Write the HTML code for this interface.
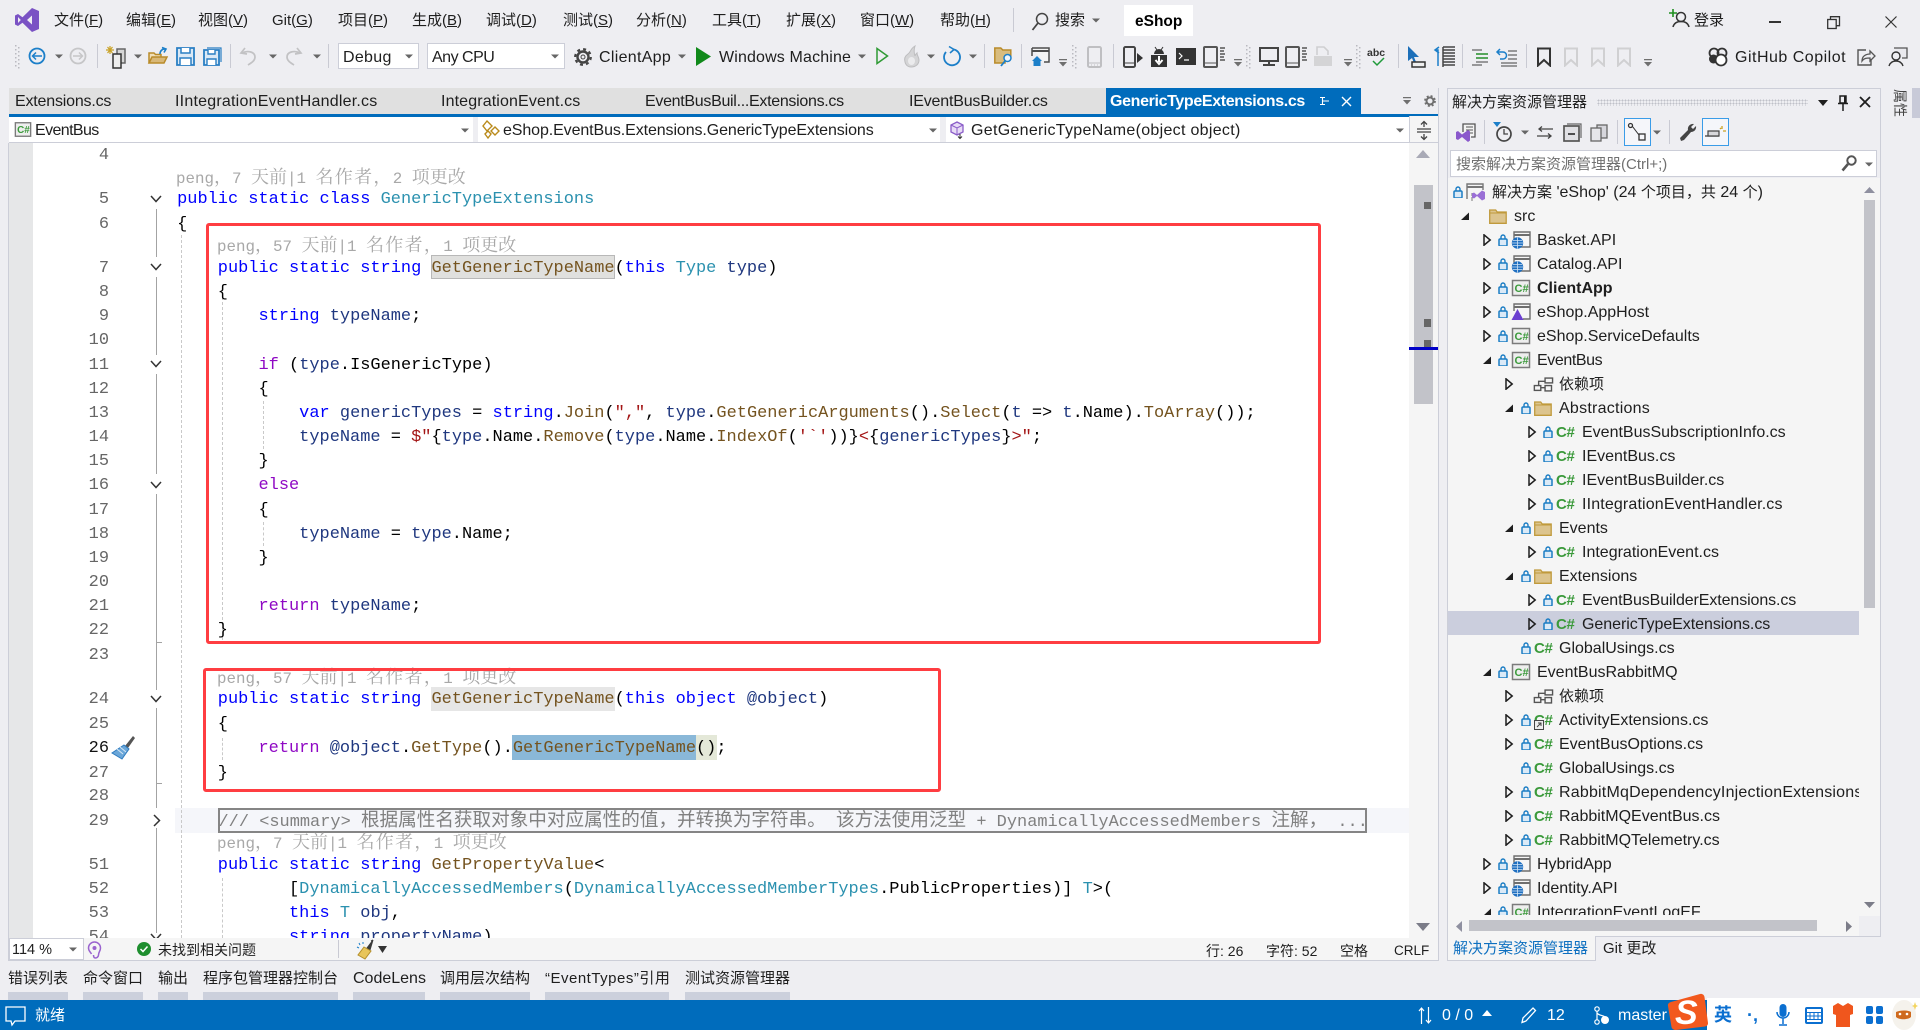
<!DOCTYPE html>
<html lang="zh-CN"><head><meta charset="utf-8"><title>eShop - Visual Studio</title>
<style>
*{box-sizing:border-box}
html,body{margin:0;padding:0;width:1920px;height:1030px;overflow:hidden;background:#eeeef2}
body{position:relative;font-family:"Liberation Sans","Noto Sans CJK SC",sans-serif;color:#1e1e1e}
.t{position:absolute;white-space:nowrap;line-height:24px;font-size:15px;margin-top:1px}
.l16{font-size:16px}
.b{position:absolute}
svg.s{position:absolute;overflow:visible}
i{font-style:normal}
u{text-underline-offset:1px}
#ed{position:absolute;left:0;top:0;width:1920px;height:1030px;clip-path:inset(143px 511px 92px 9px)}
.c{position:absolute;left:136.4px;white-space:pre;font:16.97px/24px "Liberation Mono","Noto Sans CJK SC",monospace;color:#000;margin-top:2px}
.c i{font-size:18.6px;line-height:20px}
.n{position:absolute;left:49px;width:60px;text-align:right;font:16.97px/24px "Liberation Mono",monospace;color:#666;margin-top:2px}
.cl{position:absolute;white-space:pre;font:15.83px/24px "Liberation Mono","Noto Serif CJK SC",monospace;color:#a8a8a8;margin-top:-1px}
.cl i{font:18px/24px "Noto Serif CJK SC",serif}
.cl i.w{letter-spacing:1.3px}
.k{color:#0000ff}.m{color:#74531f}.y{color:#2b91af}.f{color:#8f08c4}.q{color:#a31515}.v{color:#1f377f}
.dg{position:absolute;width:0;border-left:1px dashed #c9c9c9}
.ol{position:absolute;left:156px;width:1px;background:#a3a3a3}
.red{position:absolute;border:3px solid #ff3d41;border-radius:3px}
#tree{position:absolute;left:0;top:0;width:1920px;height:1030px;clip-path:inset(180px 61px 115px 1448px)}
.r{position:absolute;left:0;width:1859px;height:24px;white-space:nowrap}
.r>*{position:absolute}
.r .x{top:1px;line-height:24px;font-size:16px;white-space:nowrap}
.r .x i{font-size:15px}
.r .a{top:6px;width:12px;height:12px}
.r .l{top:6px;width:12px;height:12px}
.r .i{top:3px;width:20px;height:18px}
.r .cs{top:1px;line-height:24px;font-size:15px;font-weight:700;color:#3b9a3b;letter-spacing:-.3px}
.L1 .a{left:1481px}.L1 .l{left:1497px}.L1 .i{left:1511px}.L1 .x{left:1537px}
.L2 .a{left:1503px}.L2 .l{left:1520px}.L2 .i{left:1534px}.L2 .x{left:1559px}.L2 .cs{left:1534px}
.L3 .a{left:1526px}.L3 .l{left:1542px}.L3 .cs{left:1556px}.L3 .x{left:1582px}
.sep{position:absolute;width:1px;background:#c9cad3}
.tab{color:#1e1e1e}
.bt{position:absolute;top:992px;height:8px;background:#ccd0dc}
</style></head><body>
<svg width="0" height="0" style="position:absolute">
<defs>
<symbol id="open" viewBox="0 0 12 12"><path d="M3 .8 9.2 6 3 11.2Z" fill="none" stroke="#1e1e1e" stroke-width="1.5"/></symbol>
<symbol id="exp" viewBox="0 0 12 12"><path d="M10 2.5V10H2Z" fill="#1e1e1e"/></symbol>
<symbol id="lock" viewBox="0 0 12 12"><rect x="2" y="5" width="8" height="7" rx="1" fill="#dbeaf7" stroke="#1b7dc4" stroke-width="1.5"/><path d="M4 5V3a2 2 0 0 1 4 0v2" fill="none" stroke="#1b7dc4" stroke-width="1.4"/></symbol>
<symbol id="proj" viewBox="0 0 20 18"><rect x="1.5" y="1.5" width="17" height="15" fill="#eee" stroke="#7b7b7b" stroke-width="1.5"/><text x="3.5" y="13" font-family="Liberation Sans" font-size="11" font-weight="700" fill="#3b9a3b">C#</text></symbol>
<symbol id="web" viewBox="0 0 20 18"><path d="M3 8V1h16v15H9" fill="#f6f6f6" stroke="#6e6e6e" stroke-width="1.4"/><path d="M3 4h16" stroke="#6e6e6e" stroke-width="2"/><circle cx="6.5" cy="12" r="5.7" fill="#1f6fc0"/><path d="M1 12h11M6.5 6.5v11M2 9.5h9M2 14.5h9" stroke="#cfe3f5" stroke-width=".8"/></symbol>
<symbol id="apphost" viewBox="0 0 20 18"><path d="M3 8V1h16v15H12" fill="#f6f6f6" stroke="#6e6e6e" stroke-width="1.4"/><path d="M3 4h16" stroke="#6e6e6e" stroke-width="2"/><path d="M6.5 6 12.5 17H.5Z" fill="#6b3fd0"/></symbol>
<symbol id="sln" viewBox="0 0 20 18"><path d="M1 16V1h16v6" fill="#f5f5f5" stroke="#777" stroke-width="1.4"/><path d="M1 4h16" stroke="#777" stroke-width="2"/><path d="M6 14v4M6 10v3" stroke="#777"/><path d="M8 9.5 11 12l5-4.500 3 1.500v7L16 17.500 11 13l-3 2.500-2-1v-4Z" fill="#9a6fd6"/></symbol>
<symbol id="folder" viewBox="0 0 18 15"><path d="M.7 14.300V1h6l1.500 2h9v11.300Z" fill="#dcc48e" stroke="#c09a3c" stroke-width="1.300"/><path d="M1 4h16" stroke="#c09a3c"/></symbol>
<symbol id="dep" viewBox="0 0 20 14"><rect x="1" y="8" width="6" height="4.500" fill="none" stroke="#555" stroke-width="1.300"/><rect x="11" y="1" width="7" height="4.500" fill="none" stroke="#555" stroke-width="1.300"/><rect x="11" y="8" width="6" height="5" fill="none" stroke="#555" stroke-width="1.300"/><path d="M7 10h4M5 8V4h6" fill="none" stroke="#555" stroke-width="1.300"/></symbol>
<symbol id="car" viewBox="0 0 8 5"><path d="M0 .5h8L4 4.500Z" fill="#666"/></symbol>
<symbol id="drop" viewBox="0 0 10 10"><path d="M1 1h8v1.200H1ZM1 4h8L5 8.500Z" fill="#6f6f6f"/></symbol>
<symbol id="grip" viewBox="0 0 6 24"><g fill="#b9b9c0"><rect x="0" y="0" width="1.500" height="1.500"/><rect x="3" y="2" width="1.500" height="1.500"/><rect x="0" y="4" width="1.500" height="1.500"/><rect x="3" y="6" width="1.500" height="1.500"/><rect x="0" y="8" width="1.500" height="1.500"/><rect x="3" y="10" width="1.500" height="1.500"/><rect x="0" y="12" width="1.500" height="1.500"/><rect x="3" y="14" width="1.500" height="1.500"/><rect x="0" y="16" width="1.500" height="1.500"/><rect x="3" y="18" width="1.500" height="1.500"/><rect x="0" y="20" width="1.500" height="1.500"/><rect x="3" y="22" width="1.500" height="1.500"/></g></symbol>
<symbol id="phone" viewBox="0 0 20 24"><rect x="3" y="2" width="13" height="20" rx="1.500" fill="none" stroke="#555" stroke-width="2"/><path d="M3 18h13" stroke="#555" stroke-width="1"/><path d="M6 20h1M9 20h1M12 20h1" stroke="#555"/></symbol>
<symbol id="lines" viewBox="0 0 24 24"><rect x="2" y="2" width="13" height="20" rx="1" fill="none" stroke="#555" stroke-width="2"/><path d="M2 18h13" stroke="#555"/><path d="M18 3h5M18 6h4M18 9h5M18 12h4M18 15h5" stroke="#555" stroke-width="1.500"/></symbol>
<symbol id="bm" viewBox="0 0 16 20"><path d="M2 1.500h12v17L8 13l-6 5.500Z" fill="none" stroke="currentColor" stroke-width="2"/></symbol>
</defs></svg>

<!-- title bar -->
<svg class="s" style="left:15px;top:8px" width="24" height="24" viewBox="0 0 24 24"><path fill-rule="evenodd" fill="#7a52c4" d="M17 0 24 3V21L17 24 7.500 14.800 3 18 0 16.500V7.500L3 6 7.500 9.200ZM3 9V15L5.800 12ZM17 7.500 12 12l5 4.500Z"/></svg>
<div class="t" style="left:54px;top:8px">文件(<u>F</u>)</div>
<div class="t" style="left:126px;top:8px">编辑(<u>E</u>)</div>
<div class="t" style="left:198px;top:8px">视图(<u>V</u>)</div>
<div class="t" style="left:272px;top:8px">Git(<u>G</u>)</div>
<div class="t" style="left:338px;top:8px">项目(<u>P</u>)</div>
<div class="t" style="left:412px;top:8px">生成(<u>B</u>)</div>
<div class="t" style="left:486px;top:8px">调试(<u>D</u>)</div>
<div class="t" style="left:563px;top:8px">测试(<u>S</u>)</div>
<div class="t" style="left:636px;top:8px">分析(<u>N</u>)</div>
<div class="t" style="left:712px;top:8px">工具(<u>T</u>)</div>
<div class="t" style="left:786px;top:8px">扩展(<u>X</u>)</div>
<div class="t" style="left:860px;top:8px">窗口(<u>W</u>)</div>
<div class="t" style="left:940px;top:8px">帮助(<u>H</u>)</div>
<div class="sep" style="left:1013px;top:8px;height:24px"></div>
<svg class="s" style="left:1031px;top:12px" width="18" height="20" viewBox="0 0 18 20"><circle cx="11" cy="7" r="5.500" fill="none" stroke="#444" stroke-width="1.500"/><path d="M7 11 1.500 18" stroke="#444" stroke-width="1.800"/></svg>
<div class="t" style="left:1055px;top:8px">搜索</div>
<svg class="s" style="left:1092px;top:18px" width="8" height="5"><use href="#car"/></svg>
<div class="b" style="left:1124px;top:5px;width:69px;height:31px;background:#fff"></div>
<div class="t" style="left:1135px;top:9px;font-weight:700;font-size:15.500px;color:#000">eShop</div>
<svg class="s" style="left:1668px;top:9px" width="22" height="20" viewBox="0 0 22 20"><path d="M5 0v8M1 4h8" stroke="#1f8f1f" stroke-width="1.600"/><circle cx="13" cy="8" r="4.500" fill="none" stroke="#333" stroke-width="1.500"/><path d="M5 18c1-4 4-5.500 8-5.500s7 1.500 8 5.500" fill="none" stroke="#333" stroke-width="1.500"/></svg>
<div class="t" style="left:1694px;top:8px">登录</div>
<div class="b" style="left:1769px;top:21px;width:12px;height:1.500px;background:#333"></div>
<svg class="s" style="left:1827px;top:16px" width="13" height="13" viewBox="0 0 13 13"><rect x=".7" y="3.500" width="8.500" height="9" fill="#eeeef2" stroke="#333" stroke-width="1.300"/><path d="M3.500 3V.7h9v9H9.500" fill="none" stroke="#333" stroke-width="1.300"/></svg>
<svg class="s" style="left:1885px;top:16px" width="12" height="12"><path d="M.5.500l11 11M11.500.500l-11 11" stroke="#333" stroke-width="1.200"/></svg>

<!-- toolbar -->
<svg class="s" style="left:15px;top:45px" width="6" height="24"><use href="#grip"/></svg>
<svg class="s" style="left:27px;top:46px" width="20" height="20" viewBox="0 0 20 20"><circle cx="10" cy="10" r="7.500" fill="none" stroke="#1c7fc9" stroke-width="1.800"/><path d="M15 10H5.500M9 6.500 5.500 10 9 13.500" fill="none" stroke="#1c7fc9" stroke-width="1.500"/></svg>
<svg class="s" style="left:55px;top:54px" width="8" height="5"><use href="#car"/></svg>
<svg class="s" style="left:68px;top:46px" width="20" height="20" viewBox="0 0 20 20"><circle cx="10" cy="10" r="7.500" fill="none" stroke="#c6c6c8" stroke-width="1.800"/><path d="M5 10h9.500M11 6.500l3.500 3.500-3.500 3.500" fill="none" stroke="#c6c6c8" stroke-width="1.500"/></svg>
<div class="sep" style="left:97px;top:44px;height:24px"></div>
<svg class="s" style="left:106px;top:45px" width="24" height="24" viewBox="0 0 24 24"><path d="M4 1v8M0 5h8M1.500 2l5 6M6.500 2l-5 6" stroke="#c9a227" stroke-width="1.200"/><rect x="11" y="4" width="8" height="14" fill="#d6d6d6" stroke="#666" stroke-width="1.500"/><rect x="7" y="9" width="8" height="14" fill="#eee" stroke="#333" stroke-width="1.500"/></svg>
<svg class="s" style="left:134px;top:54px" width="8" height="5"><use href="#car"/></svg>
<svg class="s" style="left:148px;top:46px" width="20" height="20" viewBox="0 0 20 20"><path d="M1 17V7h5l1.500 1.500H13V11" fill="#f0dfb8" stroke="#b98b2a" stroke-width="1.500"/><path d="M1 17 4 11h15l-3 6Z" fill="#d8b878" stroke="#b98b2a" stroke-width="1.500"/><path d="M12 8c0-3 2-5 5-5M14 1.500 18 3l-2 3.500" fill="none" stroke="#1c7fc9" stroke-width="1.600"/></svg>
<svg class="s" style="left:176px;top:47px" width="19" height="19" viewBox="0 0 19 19"><path d="M1 1h17v17H1Z" fill="#dbe9f6" stroke="#2a7fc4" stroke-width="1.800"/><path d="M5 1v5h9V1M4 18v-7h11v7" fill="#fff" stroke="#2a7fc4" stroke-width="1.500"/></svg>
<svg class="s" style="left:203px;top:47px" width="19" height="19" viewBox="0 0 19 19"><path d="M4 1h14v14" fill="none" stroke="#2a7fc4" stroke-width="1.200"/><path d="M1 3h15v15H1Z" fill="#dbe9f6" stroke="#2a7fc4" stroke-width="1.800"/><path d="M5 3v4h7V3M4 18v-6h9v6" fill="#fff" stroke="#2a7fc4" stroke-width="1.400"/></svg>
<div class="sep" style="left:230px;top:44px;height:24px"></div>
<svg class="s" style="left:239px;top:46px" width="20" height="20" viewBox="0 0 20 20"><path d="M6 2 2 7l6 1M3 7c6-3 13-1 13 4 0 4-4 6-7 8" fill="none" stroke="#c2c2c4" stroke-width="1.700"/></svg>
<svg class="s" style="left:269px;top:54px" width="8" height="5"><use href="#car"/></svg>
<svg class="s" style="left:283px;top:46px" width="20" height="20" viewBox="0 0 20 20"><path d="M14 2l4 5-6 1M17 7C11 4 4 6 4 11c0 4 4 6 7 8" fill="none" stroke="#c2c2c4" stroke-width="1.700"/></svg>
<svg class="s" style="left:313px;top:54px" width="8" height="5"><use href="#car"/></svg>
<div class="sep" style="left:328px;top:44px;height:24px"></div>

<div class="b" style="left:338px;top:43px;width:81px;height:26px;background:#fff;border:1px solid #ccced8"></div>
<div class="t l16" style="left:343px;top:45px;letter-spacing:.3px">Debug</div>
<svg class="s" style="left:405px;top:54px" width="8" height="5"><use href="#car"/></svg>
<div class="b" style="left:427px;top:43px;width:138px;height:26px;background:#fff;border:1px solid #ccced8"></div>
<div class="t l16" style="left:432px;top:45px;letter-spacing:-.5px">Any CPU</div>
<svg class="s" style="left:551px;top:54px" width="8" height="5"><use href="#car"/></svg>
<svg class="s" style="left:574px;top:47px" width="18" height="20" viewBox="0 0 18 20"><circle cx="9" cy="10" r="5.500" fill="none" stroke="#444" stroke-width="2.400"/><circle cx="9" cy="10" r="7.800" fill="none" stroke="#444" stroke-width="2.200" stroke-dasharray="3 3.100"/><circle cx="9" cy="10" r="2" fill="none" stroke="#444"/></svg>
<div class="t l16" style="left:599px;top:45px;letter-spacing:.3px">ClientApp</div>
<svg class="s" style="left:678px;top:54px" width="8" height="5"><use href="#car"/></svg>
<svg class="s" style="left:696px;top:47px" width="15" height="19"><path d="M0 0 15 9.500 0 19Z" fill="#10891a"/></svg>
<div class="t l16" style="left:719px;top:45px;letter-spacing:.15px">Windows Machine</div>
<svg class="s" style="left:858px;top:54px" width="8" height="5"><use href="#car"/></svg>
<svg class="s" style="left:876px;top:47px" width="13" height="18"><path d="M1 1.500 11.500 9 1 16.500Z" fill="none" stroke="#2f9a35" stroke-width="1.500"/></svg>
<svg class="s" style="left:902px;top:45px" width="20" height="24" viewBox="0 0 20 24"><path d="M13 1c-5 3-4 6-7 8C3 11 2 14 3 17c1 4 4 5 6 5 5 0 8-3 8-7 0-3-2-4-2-7-1 1-2 2-2 3-1-3-1-7 0-10Z" fill="#d4d4d6" stroke="#bdbdbf"/><ellipse cx="9.500" cy="16" rx="3.500" ry="4" fill="#ebebed"/></svg>
<svg class="s" style="left:927px;top:54px" width="8" height="5"><use href="#car"/></svg>
<svg class="s" style="left:942px;top:46px" width="20" height="21" viewBox="0 0 20 21"><path d="M12 3.500A8 8 0 1 1 4 6" fill="none" stroke="#1c7fc9" stroke-width="1.800"/><path d="M7 .5 12 3.500 8 7" fill="none" stroke="#1c7fc9" stroke-width="1.600"/></svg>
<svg class="s" style="left:969px;top:54px" width="8" height="5"><use href="#car"/></svg>
<div class="sep" style="left:984px;top:44px;height:24px"></div>
<svg class="s" style="left:994px;top:47px" width="20" height="20" viewBox="0 0 20 20"><path d="M.8 16V1h6l2 2h8v6H11v7Z" fill="#d8bc7e" stroke="#b98b2a" stroke-width="1.500"/><circle cx="13.500" cy="11" r="3.500" fill="#eef5fb" stroke="#1c7fc9" stroke-width="1.500"/><path d="M11 14l-4 5" stroke="#1c7fc9" stroke-width="1.800"/></svg>
<div class="sep" style="left:1021px;top:44px;height:24px"></div>
<svg class="s" style="left:1031px;top:47px" width="19" height="20" viewBox="0 0 19 20"><path d="M1 1h17v14h-5M1 1v8" fill="#f4f4f4" stroke="#4d4d4d" stroke-width="1.500"/><path d="M1 4h17" stroke="#4d4d4d" stroke-width="2"/><path d="M1 14 6 9l5 5H9.500v5h-7v-5Z" fill="#1c7fc9"/></svg>
<svg class="s" style="left:1058px;top:58px" width="10" height="10"><use href="#drop"/></svg>
<svg class="s" style="left:1072px;top:45px" width="6" height="24"><use href="#grip"/></svg>
<svg class="s" style="left:1085px;top:45px;opacity:.3" width="20" height="24"><use href="#phone"/></svg>
<div class="sep" style="left:1113px;top:44px;height:24px"></div>
<svg class="s" style="left:1123px;top:45px" width="20" height="24" viewBox="0 0 20 24"><rect x="1" y="2" width="11" height="20" rx="1.500" fill="none" stroke="#444" stroke-width="2"/><path d="M1 18h11" stroke="#444"/><path d="M14 8l6 5-6 5Z" fill="#333"/></svg>
<svg class="s" style="left:1150px;top:45px" width="18" height="24" viewBox="0 0 18 24"><path d="M1 22V10h16v12Z" fill="#333"/><path d="M4 9a5 5 0 0 1 10 0Z" fill="#333"/><path d="M5 2l2 3M13 2l-2 3" stroke="#333"/><path d="M9 11v6M5.500 15 9 19l3.500-4" fill="none" stroke="#fff" stroke-width="2"/></svg>
<svg class="s" style="left:1176px;top:48px" width="20" height="17" viewBox="0 0 20 17"><rect width="20" height="17" fill="#333"/><path d="M3 5l3 3-3 3M8 12h5" fill="none" stroke="#fff" stroke-width="1.200"/></svg>
<svg class="s" style="left:1202px;top:45px" width="24" height="24"><use href="#lines"/></svg>
<svg class="s" style="left:1233px;top:58px" width="10" height="10"><use href="#drop"/></svg>
<svg class="s" style="left:1246px;top:45px" width="6" height="24"><use href="#grip"/></svg>
<svg class="s" style="left:1259px;top:47px" width="20" height="20" viewBox="0 0 20 20"><rect x="1" y="1" width="18" height="13" fill="none" stroke="#444" stroke-width="2"/><path d="M10 14v3M4 18h12" stroke="#444" stroke-width="2"/></svg>
<svg class="s" style="left:1284px;top:45px" width="24" height="24"><use href="#lines"/></svg>
<svg class="s" style="left:1313px;top:46px" width="20" height="22" viewBox="0 0 20 22"><path d="M4 9V1h7l4 4v4" fill="none" stroke="#cfcfd1" stroke-width="1.600"/><rect x="1" y="10" width="18" height="10" fill="#d4d4d6"/></svg>
<svg class="s" style="left:1343px;top:58px" width="10" height="10"><use href="#drop"/></svg>
<svg class="s" style="left:1356px;top:45px" width="6" height="24"><use href="#grip"/></svg>
<svg class="s" style="left:1367px;top:46px" width="22" height="22" viewBox="0 0 22 22"><text x="0" y="10" font-family="Liberation Sans" font-size="10.500" font-weight="700" fill="#333">abc</text><path d="M6 15l4 4 7-7" fill="none" stroke="#1f9a3a" stroke-width="1.500"/></svg>
<div class="sep" style="left:1398px;top:44px;height:24px"></div>
<svg class="s" style="left:1406px;top:45px" width="20" height="24" viewBox="0 0 20 24"><path d="M2 1v15l4-3 2 5 2-1-2-5h5Z" fill="#1c6fb9"/><rect x="6" y="17" width="13" height="5" fill="#eee" stroke="#333" stroke-width="1.500"/></svg>
<svg class="s" style="left:1434px;top:46px" width="22" height="22" viewBox="0 0 22 22"><path d="M4 20V4H1M5 1 1 4l4 3" fill="none" stroke="#1c7fc9" stroke-width="1.500"/><path d="M9 1h12M9 4h12M9 7h12M9 10h12M9 13h12M9 16h12M9 19h12" stroke="#444" stroke-width="1.500"/><path d="M9 1v20" stroke="#444" stroke-width="1.500"/></svg>
<div class="sep" style="left:1462px;top:44px;height:24px"></div>
<svg class="s" style="left:1472px;top:48px" width="17" height="18" viewBox="0 0 17 18"><path d="M0 2h10M4 6h12M4 10h12M4 14h12M0 17h10" stroke="#666" stroke-width="1.300"/><path d="M4 6h12M4 10h12" stroke="#2f9a35" stroke-width="1.500"/></svg>
<svg class="s" style="left:1497px;top:47px" width="21" height="20" viewBox="0 0 21 20"><path d="M3 2 0 5l3 3M0 5h6a3 3 0 0 1 0 7H3" fill="none" stroke="#1c7fc9" stroke-width="1.500"/><path d="M11 4h9M11 8h9M11 12h9M4 16h16M4 19h16" stroke="#666" stroke-width="1.300"/></svg>
<div class="sep" style="left:1526px;top:44px;height:24px"></div>
<svg class="s" style="left:1536px;top:47px;color:#333" width="16" height="20"><use href="#bm"/></svg>
<svg class="s" style="left:1563px;top:47px;color:#d0d0d2" width="16" height="20"><use href="#bm"/></svg>
<svg class="s" style="left:1590px;top:47px;color:#d0d0d2" width="16" height="20"><use href="#bm"/></svg>
<svg class="s" style="left:1616px;top:47px;color:#d0d0d2" width="16" height="20"><use href="#bm"/></svg>
<svg class="s" style="left:1643px;top:58px" width="10" height="10"><use href="#drop"/></svg>
<svg class="s" style="left:1708px;top:47px" width="20" height="20" viewBox="0 0 20 20"><circle cx="6" cy="6" r="4.500" fill="none" stroke="#333" stroke-width="1.800"/><circle cx="14" cy="6" r="4.500" fill="none" stroke="#333" stroke-width="1.800"/><circle cx="5.500" cy="12" r="4.500" fill="#333"/><circle cx="13" cy="13" r="5.500" fill="#fff" stroke="#333" stroke-width="1.800"/></svg>
<div class="t l16" style="left:1735px;top:45px;letter-spacing:.5px">GitHub Copilot</div>
<svg class="s" style="left:1857px;top:48px" width="18" height="18" viewBox="0 0 18 18"><path d="M9 2H1v15h13v-6" fill="none" stroke="#555" stroke-width="1.400"/><path d="M5 13c0-5 4-7 8-7V3l5 5-5 5v-3c-3 0-6 0-8 3Z" fill="none" stroke="#555" stroke-width="1.300"/></svg>
<svg class="s" style="left:1888px;top:47px" width="20" height="20" viewBox="0 0 20 20"><path d="M6 1h13v10h-5" fill="#e9e9ee" stroke="#555" stroke-width="1.300"/><circle cx="8" cy="9" r="4" fill="#eeeef2" stroke="#333" stroke-width="1.400"/><path d="M1 19c1-3 3-5 7-5s6 2 7 5" fill="none" stroke="#333" stroke-width="1.400"/></svg>

<!-- tab strip -->
<div class="b" style="left:9px;top:88px;width:1097px;height:26px;background:#e0e0e0"></div>
<div class="t tab l16" style="left:15px;top:89px;letter-spacing:-.19px">Extensions.cs</div>
<div class="t tab l16" style="left:175px;top:89px;letter-spacing:.22px">IIntegrationEventHandler.cs</div>
<div class="t tab l16" style="left:441px;top:89px;letter-spacing:.13px">IntegrationEvent.cs</div>
<div class="t tab l16" style="left:645px;top:89px;letter-spacing:-.3px">EventBusBuil...Extensions.cs</div>
<div class="t tab l16" style="left:909px;top:89px;letter-spacing:-.19px">IEventBusBuilder.cs</div>
<div class="b" style="left:1106px;top:88px;width:255px;height:28px;background:#006cbc"></div>
<div class="t l16" style="left:1110px;top:89px;color:#fff;font-weight:700;letter-spacing:-.35px">GenericTypeExtensions.cs</div>
<svg class="s" style="left:1319px;top:96px" width="11" height="11"><path d="M3.500 1v8M3.500 5H10M1 1.500h5M1 8.500h5" stroke="#fff" stroke-width="1.100" fill="none"/></svg>
<svg class="s" style="left:1341px;top:96px" width="11" height="11"><path d="M1 1l9 9M10 1l-9 9" stroke="#fff" stroke-width="1.400"/></svg>
<svg class="s" style="left:1402px;top:96px" width="10" height="10"><use href="#drop"/></svg>
<svg class="s" style="left:1424px;top:95px" width="12" height="12" viewBox="0 0 12 12"><circle cx="6" cy="6" r="3.500" fill="none" stroke="#6f6f6f" stroke-width="2"/><circle cx="6" cy="6" r="5" fill="none" stroke="#6f6f6f" stroke-width="1.800" stroke-dasharray="2 2"/></svg>
<div class="b" style="left:9px;top:114px;width:1429px;height:3px;background:#006cbc"></div>

<!-- nav bar -->
<div class="b" style="left:9px;top:117px;width:1429px;height:26px;background:#ccced8"></div>
<div class="b" style="left:9px;top:117px;width:464px;height:25px;background:#fff"></div>
<div class="b" style="left:473px;top:117px;width:5px;height:25px;background:#eeeef2"></div>
<div class="b" style="left:478px;top:117px;width:462px;height:25px;background:#fff"></div>
<div class="b" style="left:940px;top:117px;width:6px;height:25px;background:#eeeef2"></div>
<div class="b" style="left:946px;top:117px;width:463px;height:25px;background:#fff"></div>
<div class="b" style="left:1409px;top:116px;width:29px;height:27px;background:#f5f5f5;border-bottom:1px solid #ccced8;border-left:1px solid #ccced8"></div>
<svg class="s" style="left:14px;top:121px" width="18" height="17" viewBox="0 0 20 18"><use href="#proj"/></svg>
<div class="t l16" style="left:35px;top:118px;letter-spacing:-.6px">EventBus</div>
<svg class="s" style="left:461px;top:128px" width="8" height="5"><use href="#car"/></svg>
<svg class="s" style="left:482px;top:120px" width="19" height="20" viewBox="0 0 19 20"><g fill="#fff" stroke="#b98a1a" stroke-width="1.400"><path d="M5 1 10 6 5 11 1 6Z"/><path d="M13 7l4 4-4 4-4-4Z"/><path d="M6 11l3 3-3 4-3-4Z"/></g></svg>
<div class="t l16" style="left:503px;top:118px;letter-spacing:-.1px">eShop.EventBus.Extensions.GenericTypeExtensions</div>
<svg class="s" style="left:929px;top:128px" width="8" height="5"><use href="#car"/></svg>
<svg class="s" style="left:950px;top:121px" width="18" height="18" viewBox="0 0 18 18"><path d="M7 1 13 4v7l-6 3-6-3V4Z" fill="#e8dcf6" stroke="#8a5dc8" stroke-width="1.300"/><path d="M1 4l6 3 6-3M7 7v7" fill="none" stroke="#8a5dc8"/><path d="M10 13v4M8 15.500l2 2 2-2" fill="none" stroke="#333"/></svg>
<div class="t l16" style="left:971px;top:118px;letter-spacing:.3px">GetGenericTypeName(object object)</div>
<svg class="s" style="left:1396px;top:128px" width="8" height="5"><use href="#car"/></svg>
<svg class="s" style="left:1417px;top:121px" width="14" height="19" viewBox="0 0 14 19"><path d="M0 8h14M0 11h14" stroke="#444" stroke-width="1.300"/><path d="M7 6V1M4 3.500 7 .5l3 3M7 13v5M4 15.500l3 3 3-3" fill="none" stroke="#444" stroke-width="1.300"/></svg>

<!-- editor -->
<div class="b" style="left:8px;top:143px;width:1px;height:818px;background:#ccced8"></div>
<div class="b" style="left:9px;top:143px;width:24px;height:795px;background:#e6e7e8"></div>
<div class="b" style="left:33px;top:143px;width:1376px;height:795px;background:#fff"></div>
<div class="b" style="left:1409px;top:143px;width:29px;height:795px;background:#f5f5f5"></div>
<div class="b" style="left:1438px;top:88px;width:1px;height:873px;background:#ccced8"></div>
<svg class="s" style="left:1416px;top:150px" width="14" height="8"><path d="M0 8 7 0l7 8Z" fill="#8f90a0" opacity=".75"/></svg>
<div class="b" style="left:1414px;top:185px;width:19px;height:219px;background:#c2c3c9"></div>
<div class="b" style="left:1424px;top:202px;width:7px;height:7px;background:#666"></div>
<div class="b" style="left:1424px;top:319px;width:7px;height:8px;background:#666"></div>
<div class="b" style="left:1424px;top:340px;width:7px;height:7px;background:#666"></div>
<div class="b" style="left:1409px;top:347px;width:29px;height:3px;background:#0000c8"></div>
<svg class="s" style="left:1416px;top:923px" width="14" height="8"><path d="M0 0h14L7 8Z" fill="#7b7c88"/></svg>

<div id="ed">
<!-- highlights -->
<div class="b" style="left:431px;top:255px;width:184px;height:24px;background:#e0e0de;border:1px solid #b8b8b8"></div>
<div class="b" style="left:431px;top:687px;width:184px;height:24px;background:#e6e6e6"></div>
<div class="b" style="left:512px;top:735px;width:184px;height:25px;background:#8ab8d8"></div>
<div class="b" style="left:696px;top:735px;width:21px;height:25px;background:#e4e8d8"></div>
<div class="b" style="left:175px;top:808px;width:1234px;height:25px;background:#f5f6fa"></div>
<div class="b" style="left:218px;top:808px;width:1149px;height:25px;border:2px solid #858585;background:#f5f6fa"></div>

<!-- indent guides -->
<div class="dg" style="left:181px;top:235px;height:703px"></div>
<div class="dg" style="left:222px;top:292px;height:348px"></div>
<div class="dg" style="left:263px;top:401px;height:48px"></div>
<div class="dg" style="left:263px;top:522px;height:24px"></div>
<div class="dg" style="left:222px;top:738px;height:22px"></div>
<div class="dg" style="left:222px;top:878px;height:60px"></div>

<!-- outline -->
<div class="ol" style="top:209px;height:48px"></div>
<div class="ol" style="top:277px;height:78px"></div>
<div class="ol" style="top:374px;height:100px"></div>
<div class="ol" style="top:494px;height:196px"></div>
<div class="ol" style="top:708px;height:100px"></div>
<div class="ol" style="top:828px;height:105px"></div>
<div class="b" style="left:156px;top:642px;width:6px;height:1px;background:#a3a3a3"></div>
<div class="b" style="left:156px;top:783px;width:6px;height:1px;background:#a3a3a3"></div>
<svg class="s" style="left:150px;top:195px" width="12" height="8"><path d="M1 1l5 5.500L11 1" fill="none" stroke="#333" stroke-width="1.500"/></svg>
<svg class="s" style="left:150px;top:263px" width="12" height="8"><path d="M1 1l5 5.500L11 1" fill="none" stroke="#333" stroke-width="1.500"/></svg>
<svg class="s" style="left:150px;top:360px" width="12" height="8"><path d="M1 1l5 5.500L11 1" fill="none" stroke="#333" stroke-width="1.500"/></svg>
<svg class="s" style="left:150px;top:481px" width="12" height="8"><path d="M1 1l5 5.500L11 1" fill="none" stroke="#333" stroke-width="1.500"/></svg>
<svg class="s" style="left:150px;top:695px" width="12" height="8"><path d="M1 1l5 5.500L11 1" fill="none" stroke="#333" stroke-width="1.500"/></svg>
<svg class="s" style="left:153px;top:814px" width="8" height="13"><path d="M1 1l5.500 5.500L1 12" fill="none" stroke="#333" stroke-width="1.500"/></svg>
<svg class="s" style="left:150px;top:933px" width="12" height="8"><path d="M1 1l5 5.500L11 1" fill="none" stroke="#333" stroke-width="1.500"/></svg>

<!-- line numbers -->
<div class="n" style="top:142px">4</div>
<div class="n" style="top:186px">5</div>
<div class="n" style="top:211px">6</div>
<div class="n" style="top:255px">7</div>
<div class="n" style="top:279px">8</div>
<div class="n" style="top:303px">9</div>
<div class="n" style="top:327px">10</div>
<div class="n" style="top:352px">11</div>
<div class="n" style="top:376px">12</div>
<div class="n" style="top:400px">13</div>
<div class="n" style="top:424px">14</div>
<div class="n" style="top:448px">15</div>
<div class="n" style="top:472px">16</div>
<div class="n" style="top:497px">17</div>
<div class="n" style="top:521px">18</div>
<div class="n" style="top:545px">19</div>
<div class="n" style="top:569px">20</div>
<div class="n" style="top:593px">21</div>
<div class="n" style="top:617px">22</div>
<div class="n" style="top:642px">23</div>
<div class="n" style="top:686px">24</div>
<div class="n" style="top:711px">25</div>
<div class="n" style="top:735px;color:#111">26</div>
<div class="n" style="top:760px">27</div>
<div class="n" style="top:783px">28</div>
<div class="n" style="top:808px">29</div>
<div class="n" style="top:852px">51</div>
<div class="n" style="top:876px">52</div>
<div class="n" style="top:900px">53</div>
<div class="n" style="top:924px">54</div>
<svg class="s" style="left:111px;top:736px" width="24" height="23" viewBox="0 0 24 23"><path d="M22 0l2 2-7 10-3-2Z" fill="#555"/><path d="M13 9l5 4-7 10-10-6Z" fill="#6aa6d8" stroke="#2f7cc0"/><path d="M6 13l6 5M9 11l6 5" stroke="#d7e8f6"/></svg>

<!-- code -->
<div class="cl" style="left:176px;top:165px">peng<i>，</i>7 <i>天前</i>|1 <i class="w">名作者，</i>2 <i>项更改</i></div>
<div class="c" style="top:186px">    <span class="k">public static class</span> <span class="y">GenericTypeExtensions</span></div>
<div class="c" style="top:211px">    {</div>
<div class="cl" style="left:217px;top:233px">peng<i>，</i>57 <i>天前</i>|1 <i class="w">名作者，</i>1 <i>项更改</i></div>
<div class="c" style="top:255px">        <span class="k">public static string</span> <span class="m">GetGenericTypeName</span>(<span class="k">this</span> <span class="y">Type</span> <span class="v">type</span>)</div>
<div class="c" style="top:279px">        {</div>
<div class="c" style="top:303px">            <span class="k">string</span> <span class="v">typeName</span>;</div>
<div class="c" style="top:352px">            <span class="f">if</span> (<span class="v">type</span>.IsGenericType)</div>
<div class="c" style="top:376px">            {</div>
<div class="c" style="top:400px">                <span class="k">var</span> <span class="v">genericTypes</span> = <span class="k">string</span>.<span class="m">Join</span>(<span class="q">","</span>, <span class="v">type</span>.<span class="m">GetGenericArguments</span>().<span class="m">Select</span>(<span class="v">t</span> =&gt; <span class="v">t</span>.Name).<span class="m">ToArray</span>());</div>
<div class="c" style="top:424px">                <span class="v">typeName</span> = <span class="q">$"</span>{<span class="v">type</span>.Name.<span class="m">Remove</span>(<span class="v">type</span>.Name.<span class="m">IndexOf</span>(<span class="q">'`'</span>))}<span class="q">&lt;</span>{<span class="v">genericTypes</span>}<span class="q">&gt;"</span>;</div>
<div class="c" style="top:448px">            }</div>
<div class="c" style="top:472px">            <span class="f">else</span></div>
<div class="c" style="top:497px">            {</div>
<div class="c" style="top:521px">                <span class="v">typeName</span> = <span class="v">type</span>.Name;</div>
<div class="c" style="top:545px">            }</div>
<div class="c" style="top:593px">            <span class="f">return</span> <span class="v">typeName</span>;</div>
<div class="c" style="top:617px">        }</div>
<div class="cl" style="left:217px;top:665px">peng<i>，</i>57 <i>天前</i>|1 <i class="w">名作者，</i>1 <i>项更改</i></div>
<div class="c" style="top:686px">        <span class="k">public static string</span> <span class="m">GetGenericTypeName</span>(<span class="k">this object</span> <span class="v">@object</span>)</div>
<div class="c" style="top:711px">        {</div>
<div class="c" style="top:735px">            <span class="f">return</span> <span class="v">@object</span>.<span class="m">GetType</span>().<span class="m">GetGenericTypeName</span>();</div>
<div class="c" style="top:760px">        }</div>
<div class="c" style="top:809px;left:218.500px;color:#808080">/// &lt;summary&gt; <i>根据属性名获取对象中对应属性的值，并转换为字符串。</i> <i>该方法使用泛型</i> + DynamicallyAccessedMembers <i>注解，</i> ...</div>
<div class="cl" style="left:217px;top:830px">peng<i>，</i>7 <i>天前</i>|1 <i class="w">名作者，</i>1 <i>项更改</i></div>
<div class="c" style="top:852px">        <span class="k">public static string</span> <span class="m">GetPropertyValue</span>&lt;</div>
<div class="c" style="top:876px">               [<span class="y">DynamicallyAccessedMembers</span>(<span class="y">DynamicallyAccessedMemberTypes</span>.PublicProperties)] <span class="y">T</span>&gt;(</div>
<div class="c" style="top:900px">               <span class="k">this</span> <span class="y">T</span> <span class="v">obj</span>,</div>
<div class="c" style="top:924px">               <span class="k">string</span> <span class="v">propertyName</span>)</div>
<!-- red boxes -->
<div class="red" style="left:206px;top:223px;width:1115px;height:421px"></div>
<div class="red" style="left:203px;top:668px;width:738px;height:124px"></div>
</div>

<!-- editor status -->
<div class="b" style="left:9px;top:938px;width:1429px;height:23px;background:#f5f5f5;border-bottom:1px solid #ccced8"></div>
<div class="b" style="left:9px;top:938px;width:75px;height:22px;background:#fff;border:1px solid #ccced8"></div>
<div class="t" style="left:12px;top:937px;font-size:14.500px">114 %</div>
<svg class="s" style="left:69px;top:947px" width="8" height="5"><use href="#car"/></svg>
<svg class="s" style="left:87px;top:941px" width="15" height="18" viewBox="0 0 15 18"><path d="M7.500 1a6 6 0 0 1 6 6c0 3-2 4-2 7 0 2-2 3-3 3-1.500 0-2-1-2-3M7.500 1a6 6 0 0 0-6 6c0 3 2 4 3 6" fill="none" stroke="#9a63cf" stroke-width="1.500"/><circle cx="7.500" cy="7" r="2" fill="#9a63cf"/></svg>
<svg class="s" style="left:137px;top:942px" width="14" height="14" viewBox="0 0 14 14"><circle cx="7" cy="7" r="7" fill="#1e8e2e"/><path d="M3.500 7l2.500 2.500 4.500-5" fill="none" stroke="#fff" stroke-width="1.500"/></svg>
<div class="t" style="left:158px;top:937px;font-size:14px">未找到相关问题</div>
<div class="sep" style="left:338px;top:940px;height:18px"></div>
<svg class="s" style="left:356px;top:940px" width="18" height="20" viewBox="0 0 18 20"><path d="M17 0 11 8l3 2ZM15 1l2-1" fill="#3a3a3a" stroke="#3a3a3a"/><path d="M8 7l7 4-6 8-7-4Z" fill="#e8c55a" stroke="#b48f2a"/><path d="M3 3l1 2M7 2v2M1 7l2 1" stroke="#1c7fc9"/></svg>
<svg class="s" style="left:378px;top:946px" width="9" height="7"><path d="M0 0h9L4.500 7Z" fill="#333"/></svg>
<div class="t" style="left:1206px;top:938px;font-size:14px">行: 26</div>
<div class="t" style="left:1266px;top:938px;font-size:14px">字符: 52</div>
<div class="t" style="left:1340px;top:938px;font-size:14px">空格</div>
<div class="t" style="left:1394px;top:938px;font-size:13.500px">CRLF</div>

<!-- bottom tool tabs -->
<div class="t" style="left:8px;top:966px">错误列表</div><div class="bt" style="left:8px;width:60px"></div>
<div class="t" style="left:83px;top:966px">命令窗口</div><div class="bt" style="left:83px;width:60px"></div>
<div class="t" style="left:158px;top:966px">输出</div><div class="bt" style="left:158px;width:30px"></div>
<div class="t" style="left:203px;top:966px">程序包管理器控制台</div><div class="bt" style="left:203px;width:135px"></div>
<div class="t l16" style="left:353px;top:966px">CodeLens</div><div class="bt" style="left:353px;width:72px"></div>
<div class="t" style="left:440px;top:966px">调用层次结构</div><div class="bt" style="left:440px;width:90px"></div>
<div class="t" style="left:545px;top:966px;letter-spacing:.5px">“EventTypes”引用</div><div class="bt" style="left:545px;width:124px"></div>
<div class="t" style="left:685px;top:966px">测试资源管理器</div><div class="bt" style="left:685px;width:105px"></div>

<!-- solution explorer -->
<div class="b" style="left:1447px;top:88px;width:434px;height:849px;border:1px solid #ccced8;background:#eeeef2"></div>
<div class="t" style="left:1452px;top:90px">解决方案资源管理器</div>
<div class="b" style="left:1597px;top:99px;width:211px;height:7px;background-image:radial-gradient(#bfc0c8 .8px,transparent 1px);background-size:3px 3px"></div>
<svg class="s" style="left:1818px;top:100px" width="10" height="6"><path d="M0 0h10L5 6Z" fill="#1e1e1e"/></svg>
<svg class="s" style="left:1838px;top:95px" width="10" height="16" viewBox="0 0 10 16"><path d="M2 1h6v7H2ZM0 8.500h10M5 9v7" fill="none" stroke="#1e1e1e" stroke-width="1.500"/><path d="M6 1h2v7H6Z" fill="#1e1e1e"/></svg>
<svg class="s" style="left:1859px;top:96px" width="12" height="12"><path d="M1 1l10 10M11 1 1 11" stroke="#1e1e1e" stroke-width="1.800"/></svg>
<svg class="s" style="left:1455px;top:123px" width="21" height="20" viewBox="0 0 21 20"><path d="M8 9V1h12v13h-4" fill="#f3f3f3" stroke="#555" stroke-width="1.300"/><path d="M11 4h7M11 7h7M11 10h7" stroke="#555"/><path d="M1 9 3 8l4 3.500L13 7l2 1.500v9L13 19l-6-5-4 3-2-1Z" fill="#8a58cc"/></svg>
<div class="sep" style="left:1484px;top:120px;height:24px"></div>
<svg class="s" style="left:1493px;top:121px" width="20" height="22" viewBox="0 0 20 22"><path d="M0 1h8L4 6Z" fill="#1c7fc9"/><circle cx="11" cy="13" r="7" fill="none" stroke="#444" stroke-width="1.700"/><path d="M11 8v5h4" fill="none" stroke="#444" stroke-width="1.300"/></svg>
<svg class="s" style="left:1521px;top:130px" width="8" height="5"><use href="#car"/></svg>
<svg class="s" style="left:1537px;top:126px" width="16" height="13" viewBox="0 0 16 13"><path d="M16 3H2M5 .5 2 3l3 2.500M0 10h14M11 7.500l3 2.500-3 2.500" fill="none" stroke="#444" stroke-width="1.300"/></svg>
<svg class="s" style="left:1563px;top:123px" width="19" height="19" viewBox="0 0 19 19"><path d="M4 1h14v14" fill="none" stroke="#666" stroke-width="1.200"/><rect x="1" y="3" width="15" height="15" fill="#e0e0e4" stroke="#555" stroke-width="1.700"/><path d="M5 11h7" stroke="#333" stroke-width="1.700"/></svg>
<svg class="s" style="left:1590px;top:124px" width="18" height="18" viewBox="0 0 18 18"><rect x="7" y="1" width="10" height="13" fill="#d6d6dc" stroke="#666" stroke-width="1.300"/><rect x="1" y="4" width="10" height="13" fill="#e6e6ea" stroke="#666" stroke-width="1.300"/></svg>
<div class="sep" style="left:1617px;top:120px;height:24px"></div>
<div class="b" style="left:1624px;top:118px;width:27px;height:28px;border:1px solid #3a9ce8;background:#f5f6fa"></div>
<svg class="s" style="left:1627px;top:122px" width="20" height="20" viewBox="0 0 20 20"><circle cx="3.500" cy="3.500" r="2" fill="none" stroke="#333" stroke-width="1.300"/><rect x="12" y="12" width="6" height="6" fill="none" stroke="#333" stroke-width="1.300"/><path d="M5.500 4.500 12 13" stroke="#333"/></svg>
<svg class="s" style="left:1653px;top:130px" width="8" height="5"><use href="#car"/></svg>
<div class="sep" style="left:1669px;top:120px;height:24px"></div>
<svg class="s" style="left:1679px;top:123px" width="18" height="19" viewBox="0 0 18 19"><path d="M17 3l-3 3-2-2 3-3a5 5 0 0 0-6 6L1 15l1 3 3-1 7-8a5 5 0 0 0 5-6Z" fill="#444"/></svg>
<div class="b" style="left:1702px;top:118px;width:27px;height:28px;border:1px solid #3a9ce8;background:#f5f6fa"></div>
<svg class="s" style="left:1705px;top:124px" width="21" height="14" viewBox="0 0 21 14"><path d="M0 12h14" stroke="#444" stroke-width="1.300"/><path d="M3 7h11v5H3Z" fill="#d8d8dc" stroke="#444" stroke-width="1.200"/><path d="M17 2v3M21 7h-3M15 4l1 1" stroke="#c9a227" stroke-width="1.300"/></svg>

<div class="b" style="left:1450px;top:150px;width:427px;height:27px;background:#fff;border:1px solid #ccced8"></div>
<div class="t" style="left:1456px;top:152px;color:#717171">搜索解决方案资源管理器(Ctrl+;)</div>
<svg class="s" style="left:1841px;top:155px" width="16" height="17" viewBox="0 0 16 17"><circle cx="10.500" cy="5.500" r="4.200" fill="none" stroke="#555" stroke-width="2"/><path d="M7 9l-5.500 6.500" stroke="#555" stroke-width="2.600"/></svg>
<svg class="s" style="left:1865px;top:162px" width="8" height="5"><use href="#car"/></svg>

<div class="b" style="left:1448px;top:178px;width:432px;height:758px;background:#f5f5f5"></div>
<div id="tree">
<div class="b" style="left:1448px;top:611px;width:411px;height:24px;background:#cbcedd"></div>
<div class="r" style="top:180px"><svg class="l" style="left:1452px"><use href="#lock"/></svg><svg class="i" style="left:1466px"><use href="#sln"/></svg><span class="x" style="left:1492px"><i>解决方案</i> 'eShop' (24 <i>个项目，共</i> 24 <i>个</i>)</span></div>
<div class="r" style="top:204px"><svg class="a" style="left:1459px"><use href="#exp"/></svg><svg class="i" style="left:1489px;width:18px;height:15px;top:5px"><use href="#folder"/></svg><span class="x" style="left:1514px">src</span></div>
<div class="r L1" style="top:228px"><svg class="a"><use href="#open"/></svg><svg class="l"><use href="#lock"/></svg><svg class="i"><use href="#web"/></svg><span class="x">Basket.API</span></div>
<div class="r L1" style="top:252px"><svg class="a"><use href="#open"/></svg><svg class="l"><use href="#lock"/></svg><svg class="i"><use href="#web"/></svg><span class="x">Catalog.API</span></div>
<div class="r L1" style="top:276px"><svg class="a"><use href="#open"/></svg><svg class="l"><use href="#lock"/></svg><svg class="i"><use href="#proj"/></svg><span class="x" style="font-weight:700">ClientApp</span></div>
<div class="r L1" style="top:300px"><svg class="a"><use href="#open"/></svg><svg class="l"><use href="#lock"/></svg><svg class="i"><use href="#apphost"/></svg><span class="x">eShop.AppHost</span></div>
<div class="r L1" style="top:324px"><svg class="a"><use href="#open"/></svg><svg class="l"><use href="#lock"/></svg><svg class="i"><use href="#proj"/></svg><span class="x">eShop.ServiceDefaults</span></div>
<div class="r L1" style="top:348px"><svg class="a"><use href="#exp"/></svg><svg class="l"><use href="#lock"/></svg><svg class="i"><use href="#proj"/></svg><span class="x" style="letter-spacing:-.4px">EventBus</span></div>
<div class="r L2" style="top:372px"><svg class="a"><use href="#open"/></svg><svg class="i" style="width:22px;height:15px;top:5px;left:1533px"><use href="#dep"/></svg><span class="x"><i>依赖项</i></span></div>
<div class="r L2" style="top:396px"><svg class="a"><use href="#exp"/></svg><svg class="l"><use href="#lock"/></svg><svg class="i" style="width:18px;height:15px;top:5px"><use href="#folder"/></svg><span class="x" style="letter-spacing:.25px">Abstractions</span></div>
<div class="r L3" style="top:420px"><svg class="a"><use href="#open"/></svg><svg class="l"><use href="#lock"/></svg><span class="cs">C#</span><span class="x">EventBusSubscriptionInfo.cs</span></div>
<div class="r L3" style="top:444px"><svg class="a"><use href="#open"/></svg><svg class="l"><use href="#lock"/></svg><span class="cs">C#</span><span class="x">IEventBus.cs</span></div>
<div class="r L3" style="top:468px"><svg class="a"><use href="#open"/></svg><svg class="l"><use href="#lock"/></svg><span class="cs">C#</span><span class="x">IEventBusBuilder.cs</span></div>
<div class="r L3" style="top:492px"><svg class="a"><use href="#open"/></svg><svg class="l"><use href="#lock"/></svg><span class="cs">C#</span><span class="x" style="letter-spacing:.15px">IIntegrationEventHandler.cs</span></div>
<div class="r L2" style="top:516px"><svg class="a"><use href="#exp"/></svg><svg class="l"><use href="#lock"/></svg><svg class="i" style="width:18px;height:15px;top:5px"><use href="#folder"/></svg><span class="x">Events</span></div>
<div class="r L3" style="top:540px"><svg class="a"><use href="#open"/></svg><svg class="l"><use href="#lock"/></svg><span class="cs">C#</span><span class="x">IntegrationEvent.cs</span></div>
<div class="r L2" style="top:564px"><svg class="a"><use href="#exp"/></svg><svg class="l"><use href="#lock"/></svg><svg class="i" style="width:18px;height:15px;top:5px"><use href="#folder"/></svg><span class="x">Extensions</span></div>
<div class="r L3" style="top:588px"><svg class="a"><use href="#open"/></svg><svg class="l"><use href="#lock"/></svg><span class="cs">C#</span><span class="x" style="letter-spacing:-.1px">EventBusBuilderExtensions.cs</span></div>
<div class="r L3" style="top:612px"><svg class="a"><use href="#open"/></svg><svg class="l"><use href="#lock"/></svg><span class="cs">C#</span><span class="x" style="letter-spacing:-.05px">GenericTypeExtensions.cs</span></div>
<div class="r L2" style="top:636px"><svg class="l"><use href="#lock"/></svg><span class="cs">C#</span><span class="x">GlobalUsings.cs</span></div>
<div class="r L1" style="top:660px"><svg class="a"><use href="#exp"/></svg><svg class="l"><use href="#lock"/></svg><svg class="i"><use href="#proj"/></svg><span class="x">EventBusRabbitMQ</span></div>
<div class="r L2" style="top:684px"><svg class="a"><use href="#open"/></svg><svg class="i" style="width:22px;height:15px;top:5px;left:1533px"><use href="#dep"/></svg><span class="x"><i>依赖项</i></span></div>
<div class="r L2" style="top:708px"><svg class="a"><use href="#open"/></svg><svg class="l"><use href="#lock"/></svg><span class="cs">C#</span><svg class="i" style="left:1534px;top:12px;width:10px;height:10px" viewBox="0 0 10 10"><rect x=".5" y=".5" width="9" height="9" fill="#eee" stroke="#444"/><path d="M3 7l4-4M4 3h3v3" fill="none" stroke="#444"/></svg><span class="x">ActivityExtensions.cs</span></div>
<div class="r L2" style="top:732px"><svg class="a"><use href="#open"/></svg><svg class="l"><use href="#lock"/></svg><span class="cs">C#</span><span class="x">EventBusOptions.cs</span></div>
<div class="r L2" style="top:756px"><svg class="l"><use href="#lock"/></svg><span class="cs">C#</span><span class="x">GlobalUsings.cs</span></div>
<div class="r L2" style="top:780px"><svg class="a"><use href="#open"/></svg><svg class="l"><use href="#lock"/></svg><span class="cs">C#</span><span class="x" style="letter-spacing:.2px">RabbitMqDependencyInjectionExtensions.cs</span></div>
<div class="r L2" style="top:804px"><svg class="a"><use href="#open"/></svg><svg class="l"><use href="#lock"/></svg><span class="cs">C#</span><span class="x">RabbitMQEventBus.cs</span></div>
<div class="r L2" style="top:828px"><svg class="a"><use href="#open"/></svg><svg class="l"><use href="#lock"/></svg><span class="cs">C#</span><span class="x">RabbitMQTelemetry.cs</span></div>
<div class="r L1" style="top:852px"><svg class="a"><use href="#open"/></svg><svg class="l"><use href="#lock"/></svg><svg class="i"><use href="#web"/></svg><span class="x">HybridApp</span></div>
<div class="r L1" style="top:876px"><svg class="a"><use href="#open"/></svg><svg class="l"><use href="#lock"/></svg><svg class="i"><use href="#web"/></svg><span class="x">Identity.API</span></div>
<div class="r L1" style="top:900px"><svg class="a"><use href="#exp"/></svg><svg class="l"><use href="#lock"/></svg><svg class="i"><use href="#proj"/></svg><span class="x">IntegrationEventLogEF</span></div>
</div>
<svg class="s" style="left:1864px;top:187px" width="11" height="6"><path d="M0 6 5.500 0 11 6Z" fill="#8f90a0"/></svg>
<div class="b" style="left:1864px;top:200px;width:11px;height:408px;background:#c2c3c9"></div>
<svg class="s" style="left:1864px;top:902px" width="11" height="6"><path d="M0 0h11L5.500 6Z" fill="#7b7c88"/></svg>
<div class="b" style="left:1448px;top:916px;width:411px;height:20px;background:#f5f5f5"></div>
<div class="b" style="left:1859px;top:916px;width:21px;height:20px;background:#eeeef2"></div>
<svg class="s" style="left:1456px;top:921px" width="6" height="11"><path d="M6 0v11L0 5.500Z" fill="#8f90a0"/></svg>
<div class="b" style="left:1469px;top:920px;width:348px;height:11px;background:#c2c3c9"></div>
<svg class="s" style="left:1846px;top:921px" width="6" height="11"><path d="M0 0v11l6-5.500Z" fill="#7b7c88"/></svg>
<div class="b" style="left:1447px;top:936px;width:149px;height:25px;background:#f5f5f5;border:1px solid #ccced8;border-top:none"></div>
<div class="t" style="left:1453px;top:936px;color:#0e70c0">解决方案资源管理器</div>
<div class="t" style="left:1603px;top:936px">Git 更改</div>
<div class="t" style="left:1886px;top:90px;transform:rotate(90deg);color:#444;font-size:14px">属性</div>
<div class="b" style="left:1912px;top:88px;width:8px;height:30px;background:#c8cad8"></div>

<!-- status bar -->
<div class="b" style="left:0;top:1000px;width:1920px;height:30px;background:#006cbc"></div>
<svg class="s" style="left:5px;top:1006px" width="21" height="20" viewBox="0 0 21 20"><path d="M1 1h19v14H10l-3 4-1-4H1Z" fill="none" stroke="#fff" stroke-width="1.300"/></svg>
<div class="t" style="left:35px;top:1003px;color:#fff">就绪</div>
<svg class="s" style="left:1418px;top:1007px" width="14" height="17" viewBox="0 0 14 17"><path d="M3.500 17V1M1 4l2.500-3L6 4M10.500 0v16M8 13l2.500 3 2.500-3" fill="none" stroke="#fff" stroke-width="1.200"/></svg>
<div class="t l16" style="left:1442px;top:1003px;color:#fff">0 / 0</div>
<svg class="s" style="left:1482px;top:1010px" width="10" height="6"><path d="M0 6 5 0l5 6Z" fill="#fff"/></svg>
<svg class="s" style="left:1521px;top:1007px" width="15" height="16" viewBox="0 0 15 16"><path d="M12 1l2.500 2.500L5 14l-4 1.500L2 11Z" fill="none" stroke="#fff" stroke-width="1.300"/></svg>
<div class="t l16" style="left:1547px;top:1003px;color:#fff">12</div>
<svg class="s" style="left:1593px;top:1006px" width="18" height="19" viewBox="0 0 18 19"><circle cx="4" cy="3" r="2.200" fill="none" stroke="#fff" stroke-width="1.200"/><circle cx="4" cy="16" r="2.200" fill="none" stroke="#fff" stroke-width="1.200"/><path d="M4 5v9M4 7c2 3 8 2 8 5" fill="none" stroke="#fff" stroke-width="1.200"/><circle cx="12" cy="14" r="4" fill="#fff"/></svg>
<div class="t l16" style="left:1618px;top:1003px;color:#fff">master</div>
<div class="b" style="left:1707px;top:998px;width:213px;height:32px;background:#fff"></div>
<svg class="s" style="left:1667px;top:993px" width="41" height="37" viewBox="0 0 41 37"><path d="M4 9 33 1c2-.5 4 .5 4.500 3L41 30c0 2-1 3-3 3.500L9 37c-2 0-4-1-4.500-3L1 13c-.5-2 1-3.500 3-4Z" fill="#f2591e"/><text x="8" y="31" font-family="Liberation Sans" font-size="34" font-weight="700" font-style="italic" fill="#fff">S</text></svg>
<div class="t" style="left:1714px;top:1002px;color:#0b6fd0;font-size:18px;font-weight:700">英</div>
<div class="t" style="left:1747px;top:1002px;color:#0b6fd0;font-size:18px;font-weight:700">·,</div>
<svg class="s" style="left:1776px;top:1003px" width="14" height="24" viewBox="0 0 14 24"><rect x="3.500" y="1" width="7" height="13" rx="3.500" fill="#0b6fd0"/><path d="M1 9a6 6 0 0 0 12 0M7 15v6M3 22h8" fill="none" stroke="#0b6fd0" stroke-width="1.500"/></svg>
<svg class="s" style="left:1805px;top:1007px" width="18" height="17" viewBox="0 0 18 17"><rect x="1" y="1" width="16" height="15" rx="1" fill="none" stroke="#0b6fd0" stroke-width="2"/><path d="M1 5.500h16M1 9h16M1 12.500h16M5 5v8M9 5v8M13 5v8" stroke="#0b6fd0"/></svg>
<svg class="s" style="left:1833px;top:1003px" width="20" height="24" viewBox="0 0 20 24"><path d="M0 3l5-3 5 3 5-3 5 3v8l-3 1v12H3V12l-3-1Z" fill="#f0561d"/></svg>
<svg class="s" style="left:1866px;top:1006px" width="17" height="18" viewBox="0 0 17 18"><rect width="7" height="8" rx="2" fill="#0b6fd0"/><rect x="10" width="7" height="8" rx="2" fill="#0b6fd0"/><rect y="10" width="7" height="8" rx="2" fill="#0b6fd0"/><rect x="10" y="10" width="7" height="8" rx="2" fill="#0b6fd0"/></svg>
<svg class="s" style="left:1891px;top:1000px" width="27" height="30" viewBox="0 0 27 30"><ellipse cx="13" cy="15" rx="12" ry="15" fill="#f5f2ec"/><path d="M5 12c4-2 12-2 15 0v5c-3 3-12 3-15 0Z" fill="#cf6a1e"/><circle cx="9" cy="14" r="1.300" fill="#fff"/><circle cx="16" cy="14" r="1.300" fill="#fff"/><path d="M24 2l1 3 2 1-2 1-1 3-1-3-2-1 2-1Z" fill="#f3d560"/></svg>
</body></html>
